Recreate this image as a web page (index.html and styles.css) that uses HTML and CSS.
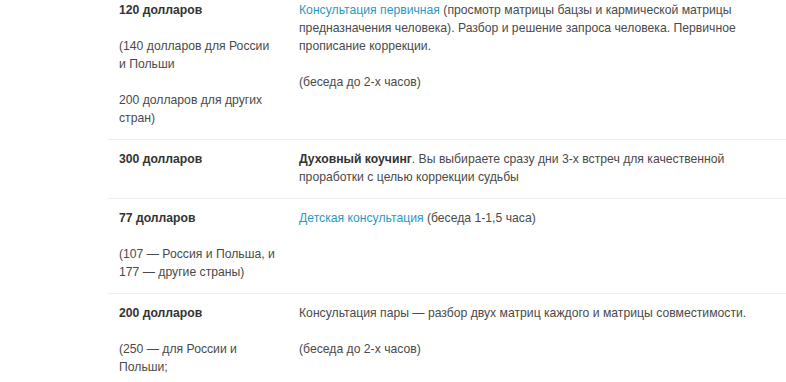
FILE: index.html
```html
<!DOCTYPE html>
<html lang="ru">
<head>
    <meta charset="UTF-8">
    <meta name="viewport" content="width=device-width, initial-scale=1.0">
    <title>Стоимость консультаций</title>
    <link rel="stylesheet" href="styles.css">
</head>
<body>
  <div class="prices">
    <table class="price-table">
      <tr>
        <td class="cost">
          <p><b>120 долларов</b></p>
          <p>(140 долларов для России и Польши</p>
          <p>200 долларов для других стран)</p>
        </td>
        <td class="desc">
          <p><a href="#">Консультация первичная</a> (просмотр матрицы бацзы и кармической матрицы предназначения человека). Разбор и решение запроса человека. Первичное прописание коррекции.</p>
          <p>(беседа до 2-х часов)</p>
        </td>
      </tr>
      <tr>
        <td class="cost">
          <p><b>300 долларов</b></p>
        </td>
        <td class="desc">
          <p><b>Духовный коучинг</b>. Вы выбираете сразу дни 3-х встреч для качественной проработки с целью коррекции судьбы</p>
        </td>
      </tr>
      <tr>
        <td class="cost">
          <p><b>77 долларов</b></p>
          <p>(107 — Россия и Польша, и 177 — другие страны)</p>
        </td>
        <td class="desc">
          <p><a href="#">Детская консультация</a> (беседа 1-1,5 часа)</p>
        </td>
      </tr>
      <tr>
        <td class="cost">
          <p><b>200 долларов</b></p>
          <p>(250 — для России и Польши;</p>
          <p>300 — для других стран)</p>
        </td>
        <td class="desc">
          <p>Консультация пары — разбор двух матриц каждого и матрицы совместимости.</p>
          <p>(беседа до 2-х часов)</p>
        </td>
      </tr>
    </table>
  </div>
</body>
</html>
```

FILE: styles.css
```css
*{
    margin: 0;
    padding: 0;
    box-sizing: border-box;
    font-family: "Liberation Sans", Arial, sans-serif;
}
body{
    background-color: #fff;
    color: #4a4a4a;
    font-size: 12.2px;
    line-height: 18px;
}
.prices{
    padding-left: 108px;
    margin-top: -9px;
}
.price-table{
    width: 678px;
    border-collapse: collapse;
}
.price-table tr{
    border-bottom: 1px solid #efefef;
}
.price-table td{
    vertical-align: top;
    padding: 10px 11px 12px;
}
.price-table .cost{
    width: 180px;
}
.price-table p{
    margin-bottom: 18px;
}
.price-table p:last-child{
    margin-bottom: 0;
}
.price-table b{
    color: #333;
}
.price-table a{
    color: #2a9ac3;
    text-decoration: none;
}
```
